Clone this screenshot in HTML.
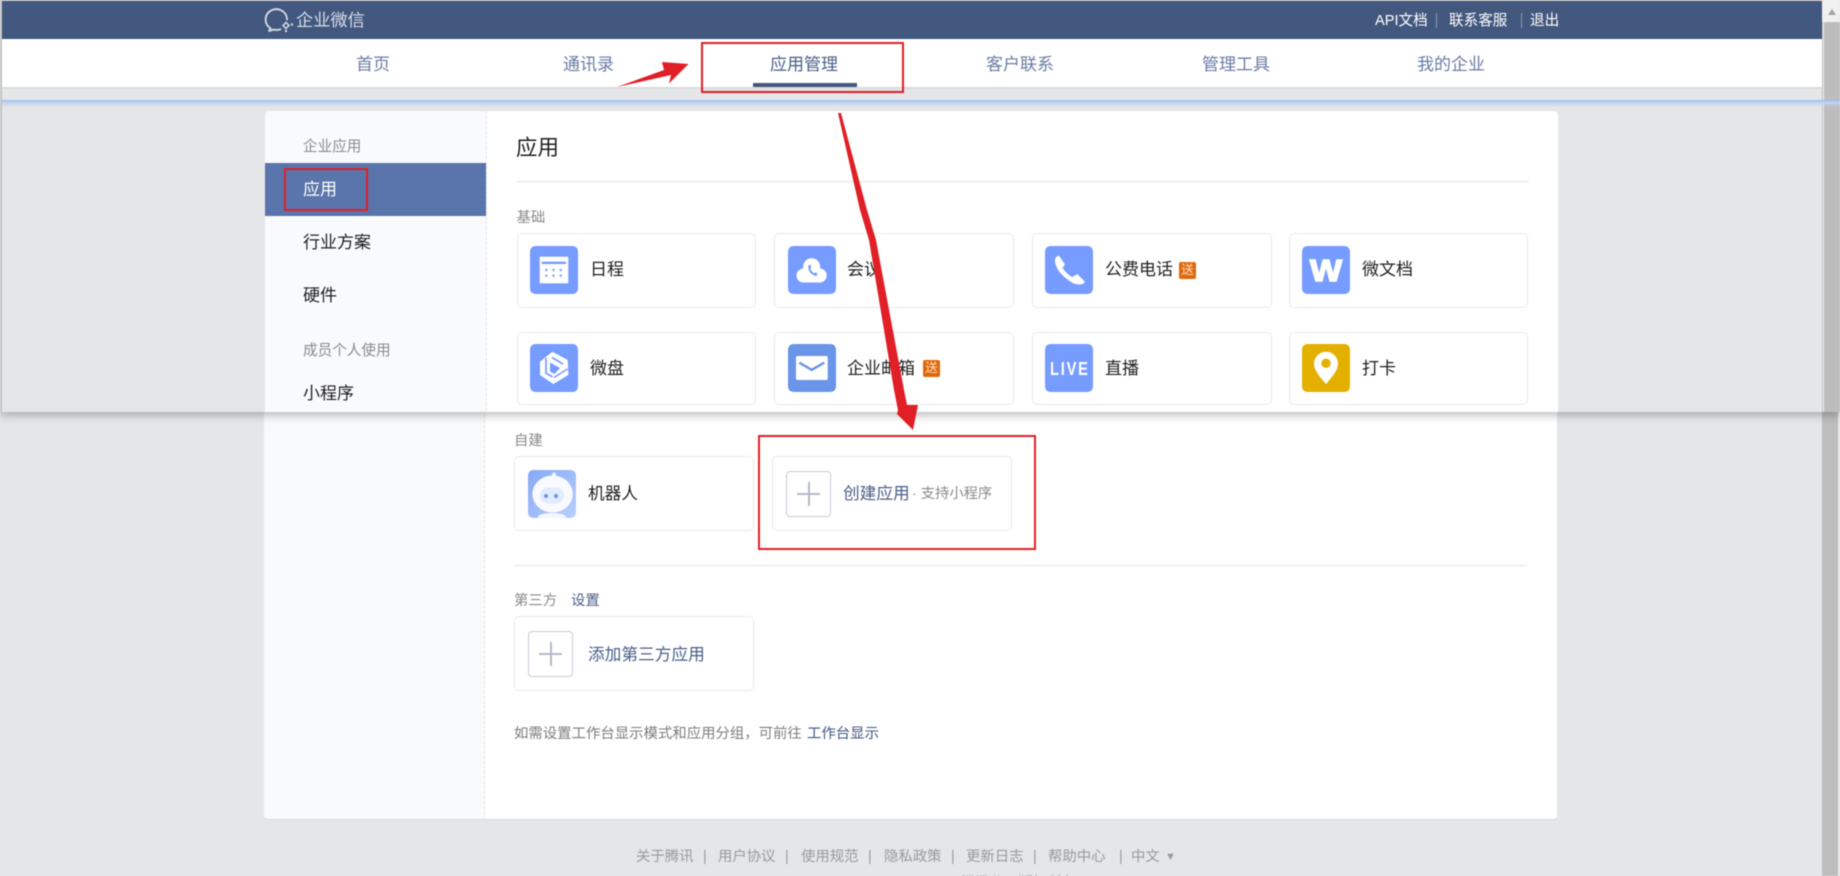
<!DOCTYPE html>
<html lang="zh-CN">
<head>
<meta charset="utf-8">
<title>企业微信</title>
<style>
html,body{margin:0;padding:0;width:1840px;height:876px;overflow:hidden;background:#e5e6e8}
body{font-family:"Liberation Sans","Noto Sans CJK SC",sans-serif;color:#1f1f1f}
#root{position:absolute;left:0;top:0;width:1840px;height:876px;overflow:hidden;filter:blur(.4px)}
.a{position:absolute}
.t{position:absolute;white-space:nowrap;line-height:24px;height:24px;font-size:17px}
.card{position:absolute;box-sizing:border-box;background:#fff;border:1.5px solid #ebebeb;border-radius:5px}
.ic{position:absolute;width:48px;height:48px;border-radius:5px;display:block}
.nav{color:#6b7ba3}
.lab{font-size:14.4px;color:#8a8a8a}
.plus{position:absolute;box-sizing:border-box;width:45px;height:46px;border:1.5px solid #c6ccd8;border-radius:4px;background:#fff}
.plus:before{content:"";position:absolute;left:10px;right:10px;top:20.5px;height:2px;background:#b4bac6}
.plus:after{content:"";position:absolute;top:10px;bottom:10px;left:20.5px;width:2px;background:#b4bac6}
.rb{position:absolute;box-sizing:border-box;border:2px solid #e01f26}
.badge{position:absolute;width:17px;height:17px;background:#e0680c;border-radius:2px;color:#fde0c4;font-size:12.5px;line-height:17px;text-align:center}
.f{position:absolute;white-space:nowrap;line-height:20px;height:20px;top:847px;font-size:14.4px;color:#9a9a9a}
.h{font-size:14.6px;color:#fff}
.sep{position:absolute;width:1px;background:#8d9ab5}
</style>
</head>
<body>
<div id="root">

<!-- lower layer -->
<div class="a" style="left:264px;top:400px;width:1293px;height:419px;background:#fff;border-bottom:1.5px solid #d8d8d8;border-radius:0 0 4px 4px"></div>
<div class="a" style="left:264px;top:400px;width:220px;height:419px;background:#f9fafc;border-right:1px dashed #e4e6ea;border-radius:0 0 0 4px"></div>
<div class="a" style="left:1822px;top:400px;width:16px;height:476px;background:#bdbdbd"></div>
<div class="a" style="left:1838px;top:400px;width:2px;height:476px;background:#e9e9e9"></div>

<div class="t lab" style="left:514px;top:429px">自建</div>
<div class="card" style="left:514px;top:456px;width:240px;height:75px"></div>
<svg class="ic" style="left:528px;top:470px" viewBox="0 0 48 48">
<defs><linearGradient id="rg" x1="0" y1="0" x2="1" y2="1"><stop offset="0" stop-color="#86a9f6"/><stop offset="1" stop-color="#bad0fb"/></linearGradient></defs>
<rect width="48" height="48" rx="5" fill="url(#rg)"/>
<ellipse cx="24" cy="47" rx="14" ry="4" fill="#f4f7ff"/>
<circle cx="26" cy="4.7" r="2.3" fill="#eef3ff"/>
<ellipse cx="24.6" cy="24" rx="20.2" ry="18.5" fill="#f8faff"/>
<rect x="12" y="17.5" width="24" height="16" rx="8" fill="#e2ebff"/>
<circle cx="18" cy="26" r="2" fill="#6b93f0"/><circle cx="28" cy="26" r="2" fill="#6b93f0"/>
</svg>
<div class="t" style="left:588px;top:482px;font-size:16.7px">机器人</div>

<div class="card" style="left:772px;top:456px;width:240px;height:75px"></div>
<div class="plus" style="left:786px;top:471px"></div>
<div class="t" style="left:843px;top:482px;font-size:16.7px;color:#4a5f88">创建应用</div>
<div class="t" style="left:912px;top:482px;font-size:14.3px;color:#8a8a8a">· 支持小程序</div>
<div class="rb" style="left:758px;top:435px;width:278px;height:115px"></div>

<div class="a" style="left:514px;top:565px;width:1013px;height:1px;background:#e4e4e4"></div>

<div class="t lab" style="left:514px;top:589px">第三方</div>
<div class="t" style="left:571px;top:589px;font-size:14.4px;color:#4a5f88">设置</div>
<div class="card" style="left:514px;top:616px;width:240px;height:75px"></div>
<div class="plus" style="left:528px;top:631px"></div>
<div class="t" style="left:588px;top:643px;font-size:16.7px;color:#4a5f88">添加第三方应用</div>

<div class="t" style="left:514px;top:722px;font-size:14.4px;color:#7d7d7d">如需设置工作台显示模式和应用分组，可前往</div>
<div class="t" style="left:807px;top:722px;font-size:14.4px;color:#3f5683">工作台显示</div>

<div class="f" style="left:636px">关于腾讯</div><div class="f" style="left:703px">|</div>
<div class="f" style="left:718px">用户协议</div><div class="f" style="left:785px">|</div>
<div class="f" style="left:801px">使用规范</div><div class="f" style="left:868px">|</div>
<div class="f" style="left:884px">隐私政策</div><div class="f" style="left:951px">|</div>
<div class="f" style="left:966px">更新日志</div><div class="f" style="left:1033px">|</div>
<div class="f" style="left:1048px">帮助中心</div><div class="f" style="left:1119px">|</div>
<div class="f" style="left:1131px">中文</div>
<div class="f" style="left:1165px;font-size:11px">▼</div>
<div class="f" style="left:946px;top:873px;font-size:14.4px;color:#9a9a9a">© 腾讯公司版权所有</div>

<!-- overlay screenshot -->
<div class="a" style="left:0;top:0;width:1840px;height:412px;box-shadow:0 3px 9px rgba(0,0,0,.28);z-index:2">
<div class="a" style="left:0;top:0;width:1840px;height:412px;overflow:hidden;background:#e5e6e8">
  <div class="a" style="left:0;top:0;width:2px;height:412px;background:#c4c4c4"></div>
  <div class="a" style="left:2px;top:1px;width:1820px;height:38px;background:#43587f"></div>
  <div class="a" style="left:0;top:0;width:1840px;height:1px;background:#c4c4c4"></div>
  <div class="a" style="left:2px;top:39px;width:1820px;height:48px;background:#fff"></div>
  <div class="a" style="left:2px;top:87px;width:1820px;height:2px;background:#dadbdd"></div>

  <!-- scrollbar -->
  <div class="a" style="left:1822px;top:0;width:18px;height:412px;background:#bdbdbd"></div>
  <div class="a" style="left:1822px;top:0;width:18px;height:22px;background:#f0f0f0"></div>
  <div class="a" style="left:1823px;top:0;width:1px;height:412px;background:#eeeeee"></div>
  <div class="a" style="left:1828px;top:9px;width:0;height:0;border-left:4.5px solid transparent;border-right:4.5px solid transparent;border-bottom:6px solid #a3a3a3"></div>

  <!-- blue line -->
  <div class="a" style="left:2px;top:100px;width:1838px;height:7px;background:linear-gradient(#9dbcf0,#c2d4f0 40%,rgba(229,230,232,0))"></div>

  <!-- logo -->
  <svg class="a" style="left:264px;top:7px" width="32" height="28" viewBox="0 0 32 28" fill="none" stroke="#d7dde8">
    <path d="M23 12.6A10.7 10.4 0 1 0 6.5 21.3L5 24 9.5 22.6Q13 23.6 16.5 22.3" stroke-width="1.8" stroke-linecap="round" stroke-linejoin="round"/>
    <path d="M22 15.5L25 18.5 22 21.5 19 18.5Z" stroke-width="1.5"/>
    <circle cx="28" cy="17.5" r="1.2" fill="#d7dde8" stroke="none"/>
    <circle cx="22" cy="24" r="1.2" fill="#d7dde8" stroke="none"/>
  </svg>
  <div class="t" style="left:296px;top:8px;font-size:17.2px;color:#d7dde8">企业微信</div>

  <div class="t h" style="left:1375px;top:9px">API文档</div>
  <div class="sep" style="left:1436px;top:13px;height:15px"></div>
  <div class="t h" style="left:1449px;top:9px">联系客服</div>
  <div class="sep" style="left:1521px;top:13px;height:15px"></div>
  <div class="t h" style="left:1530px;top:9px">退出</div>

  <!-- nav -->
  <div class="t nav" style="left:356px;top:53px">首页</div>
  <div class="t nav" style="left:563px;top:53px">通讯录</div>
  <div class="t" style="left:770px;top:53px;color:#4a5f88">应用管理</div>
  <div class="a" style="left:753px;top:83px;width:104px;height:4px;background:#43587f"></div>
  <div class="t nav" style="left:986px;top:53px">客户联系</div>
  <div class="t nav" style="left:1202px;top:53px">管理工具</div>
  <div class="t nav" style="left:1417px;top:53px">我的企业</div>
  <div class="rb" style="left:701px;top:42px;width:203px;height:51px"></div>

  <!-- panel -->
  <div class="a" style="left:265px;top:111px;width:1293px;height:320px;background:#fff;border-radius:4px"></div>
  <div class="a" style="left:265px;top:111px;width:221px;height:320px;background:#f9fafc;border-right:1px dashed #e4e6ea;border-radius:4px 0 0 4px"></div>

  <div class="t" style="left:303px;top:135px;font-size:14.6px;color:#8a8a8a">企业应用</div>
  <div class="a" style="left:265px;top:163px;width:221px;height:53px;background:#5a75ab"></div>
  <div class="t" style="left:303px;top:178px;color:#fff">应用</div>
  <div class="rb" style="left:284px;top:168px;width:84px;height:43px"></div>
  <div class="t" style="left:303px;top:231px">行业方案</div>
  <div class="t" style="left:303px;top:284px">硬件</div>
  <div class="t" style="left:303px;top:339px;font-size:14.6px;color:#8a8a8a">成员个人使用</div>
  <div class="t" style="left:303px;top:382px">小程序</div>

  <div class="t" style="left:516px;top:136px;font-size:21.5px">应用</div>
  <div class="a" style="left:517px;top:181px;width:1012px;height:1px;background:#e0e0e0"></div>
  <div class="t lab" style="left:516.5px;top:206px">基础</div>

  <!-- row 1 -->
  <div class="card" style="left:517px;top:233px;width:239px;height:75px"></div>
  <svg class="ic" style="left:530px;top:246px" viewBox="0 0 48 48">
    <rect width="48" height="48" rx="5" fill="#769cff"/>
    <rect x="9.7" y="10.7" width="28.6" height="26.6" fill="#fff"/>
    <rect x="11.7" y="15.7" width="24.4" height="2.3" fill="#769cff"/>
    <g fill="#769cff"><circle cx="16.3" cy="24" r="1.2"/><circle cx="23.5" cy="24" r="1.2"/><circle cx="30.7" cy="24" r="1.2"/><circle cx="16.3" cy="29.7" r="1.2"/><circle cx="23.5" cy="29.7" r="1.2"/><circle cx="30.7" cy="29.7" r="1.2"/></g>
  </svg>
  <div class="t" style="left:590px;top:258px">日程</div>

  <div class="card" style="left:774px;top:233px;width:240px;height:75px"></div>
  <svg class="ic" style="left:788px;top:246px" viewBox="0 0 48 48">
    <rect width="48" height="48" rx="5" fill="#769cff"/>
    <g fill="#fff"><circle cx="23.7" cy="20.7" r="8.5"/><circle cx="15.5" cy="29.5" r="7"/><circle cx="31.7" cy="29.5" r="7"/><rect x="15.5" y="24" width="16" height="12.5"/></g>
    <path d="M21.3 20.5Q21.3 27 28 29" fill="none" stroke="#769cff" stroke-width="2" stroke-linecap="round"/>
    <path d="M20 19.5L22.5 18.8 23.3 21.5 21.3 22.3ZM26 28.6L27 26.4 29.4 27.5 28.6 29.8Z" fill="#769cff"/>
  </svg>
  <div class="t" style="left:847px;top:258px">会议</div>

  <div class="card" style="left:1032px;top:233px;width:240px;height:75px"></div>
  <svg class="ic" style="left:1045px;top:246px" viewBox="0 0 48 48">
    <rect width="48" height="48" rx="5" fill="#769cff"/>
    <path d="M14 9.7L19.7 18Q19.7 20 17.3 21.5Q20.5 27 27 31Q29.5 30 32.3 28L39.7 35.5Q39 38 36.5 38.2Q31 39 27 36.5Q19.5 32 14.5 26Q9 18 10.2 13Q11 10 14 9.7Z" fill="#fff"/>
  </svg>
  <div class="t" style="left:1105px;top:258px">公费电话</div>
  <div class="badge" style="left:1179px;top:262px">送</div>

  <div class="card" style="left:1289px;top:233px;width:239px;height:75px"></div>
  <svg class="ic" style="left:1302px;top:246px" viewBox="0 0 48 48">
    <rect width="48" height="48" rx="5" fill="#769cff"/>
    <text x="24" y="35.2" text-anchor="middle" font-family="Liberation Sans" font-weight="700" font-size="31" fill="#fff" stroke="#fff" stroke-width="1.6" textLength="32" lengthAdjust="spacingAndGlyphs">W</text>
  </svg>
  <div class="t" style="left:1362px;top:258px">微文档</div>

  <!-- row 2 -->
  <div class="card" style="left:517px;top:332px;width:239px;height:73px"></div>
  <svg class="ic" style="left:530px;top:344px" viewBox="0 0 48 48">
    <rect width="48" height="48" rx="5" fill="#769cff"/>
    <path d="M22.3 7.7L37.7 16 38.3 31 23.3 40 10 31V17.7Z" fill="#fff"/>
    <path d="M16 14V29L22.5 33M22 13.5L33 20" fill="none" stroke="#769cff" stroke-width="1.7"/>
    <path d="M20 18.5L30 24 24.5 30 20 27.5Z" fill="#769cff"/>
    <path d="M24 33.5L37.5 25" fill="none" stroke="#769cff" stroke-width="1.5"/>
  </svg>
  <div class="t" style="left:590px;top:357px">微盘</div>

  <div class="card" style="left:774px;top:332px;width:240px;height:73px"></div>
  <svg class="ic" style="left:788px;top:344px" viewBox="0 0 48 48">
    <rect width="48" height="48" rx="5" fill="#6a95e8"/>
    <rect x="8" y="12" width="31.7" height="24" rx="1.5" fill="#fff"/>
    <path d="M11.3 18.7L23.7 25.8 36.3 18.7" fill="none" stroke="#6a95e8" stroke-width="2.5"/>
  </svg>
  <div class="t" style="left:847px;top:357px">企业邮箱</div>
  <div class="badge" style="left:923px;top:360px">送</div>

  <div class="card" style="left:1032px;top:332px;width:240px;height:73px"></div>
  <svg class="ic" style="left:1045px;top:344px" viewBox="0 0 48 48">
    <rect width="48" height="48" rx="5" fill="#769cff"/>
    <text transform="translate(5 31) scale(.8 1)" font-family="Liberation Sans" font-weight="700" font-size="18.4" letter-spacing="2.2" fill="#fff">LIVE</text>
  </svg>
  <div class="t" style="left:1105px;top:357px">直播</div>

  <div class="card" style="left:1289px;top:332px;width:239px;height:73px"></div>
  <svg class="ic" style="left:1302px;top:344px" viewBox="0 0 48 48">
    <rect width="48" height="48" rx="5" fill="#e4b000"/>
    <path d="M24 7.7A12 12 0 0 1 36 19.7C36 27 28 35 24 40 20 35 12 27 12 19.7A12 12 0 0 1 24 7.7Z" fill="#fff"/>
    <circle cx="24" cy="19.3" r="4.7" fill="#e4b000"/>
  </svg>
  <div class="t" style="left:1362px;top:357px">打卡</div>
</div>
</div>

<!-- red arrows -->
<svg class="a" style="left:0;top:0;z-index:3" width="1840" height="876" viewBox="0 0 1840 876">
  <polygon points="617,87 664,70 662,62 688.5,64 669,83.5 671,75" fill="#e01f26"/>
  <polygon points="838,113 841,113 867,210 876,240 904,390 907,405 918,405 913,430 897,414 898,410 894,390 869,240 860,210" fill="#e01f26"/>
</svg>
</div>
</body>
</html>
